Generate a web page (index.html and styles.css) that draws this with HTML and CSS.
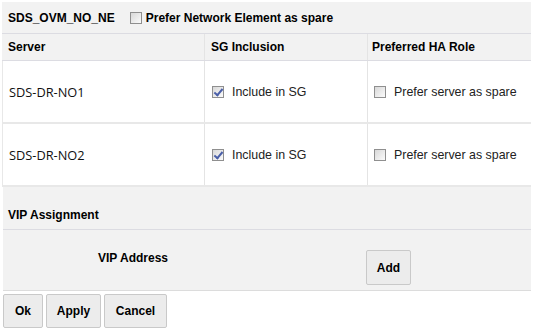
FILE: index.html
```html
<!DOCTYPE html>
<html lang="en">
<head>
  <meta charset="UTF-8">
  <title>Server Group</title>
  <link rel="stylesheet" href="styles.css">
</head>
<body>
  <div class="dialog">
    <div class="group-head">
      <span class="group-name">SDS_OVM_NO_NE</span>
      <label class="check bold"><span class="box"></span>Prefer Network Element as spare</label>
    </div>

    <div class="grid">
      <div class="row head">
        <div class="cell c1">Server</div>
        <div class="cell c2">SG Inclusion</div>
        <div class="cell c3">Preferred HA Role</div>
      </div>
      <div class="row body">
        <div class="cell c1 name">SDS-DR-NO1</div>
        <div class="cell c2"><label class="check"><span class="box checked"></span>Include in SG</label></div>
        <div class="cell c3"><label class="check"><span class="box"></span>Prefer server as spare</label></div>
      </div>
      <div class="row body">
        <div class="cell c1 name">SDS-DR-NO2</div>
        <div class="cell c2"><label class="check"><span class="box checked"></span>Include in SG</label></div>
        <div class="cell c3"><label class="check"><span class="box"></span>Prefer server as spare</label></div>
      </div>
    </div>

    <div class="vip">
      <div class="vip-title">VIP Assignment</div>
      <div class="vip-body">
        <span class="vip-label">VIP Address</span>
        <button class="btn add">Add</button>
      </div>
    </div>

    <div class="actions">
      <button class="btn ok">Ok</button>
      <button class="btn apply">Apply</button>
      <button class="btn cancel">Cancel</button>
    </div>
  </div>
</body>
</html>
```

FILE: styles.css
```css
* {
  box-sizing: border-box;
}

body {
  margin: 0;
  background-color: white;
  font-family: "Liberation Sans", Arial, sans-serif;
  font-size: 12px;
  color: #000;
}

.dialog {
  width: 533px;
  padding-top: 2px;
}

.group-head {
  display: flex;
  align-items: center;
  gap: 15px;
  height: 31px;
  margin: 0 2px;
  padding: 0 6px;
  background-color: #f2f2f2;
  font-weight: bold;
}

.check {
  display: flex;
  align-items: center;
  gap: 8px;
}

.check.bold {
  gap: 4px;
}

.box {
  width: 12px;
  height: 12px;
  border: 1px solid #8f8f8f;
  background: linear-gradient(135deg, #d8d8d8, #fbfbfb);
  position: relative;
}

.box.checked::after {
  content: "";
  position: absolute;
  left: 3px;
  top: 0px;
  width: 3px;
  height: 7px;
  border: solid #4a5fa8;
  border-width: 0 2px 2px 0;
  transform: rotate(40deg);
}

.grid {
  margin: 0 2px;
}

.row {
  display: flex;
}

.cell {
  display: flex;
  align-items: center;
  border-right: 1px solid #e4e4e4;
}

.c1 {
  width: 203px;
  padding-left: 6px;
}

.c2 {
  width: 163px;
  padding-left: 6px;
}

.c3 {
  width: 163px;
  padding-left: 4px;
  border-right: 0;
}

.row.head {
  height: 28px;
  background-color: #f2f2f2;
  border-top: 1px solid #dcdce2;
  border-bottom: 1px solid #dcdce2;
  font-weight: bold;
}

.row.body {
  height: 63px;
  border-bottom: 2px solid #e8e8e8;
  color: #222;
  font-size: 12.4px;
}

.row.body .c1 {
  border-left: 1px solid #e8e8e8;
}

.row.body .c2 {
  padding-left: 7px;
}

.row.body .c3 {
  padding-left: 6px;
}

.name {
  font-family: "Open Sans", "Liberation Sans", sans-serif;
  font-size: 12.8px;
  color: #111;
}

.vip {
  margin: 0 2px 0 3px;
  background-color: #f2f2f2;
  border-bottom: 1px solid #dcdcdc;
}

.vip-title {
  height: 43px;
  display: flex;
  align-items: flex-end;
  padding: 0 0 7px 5px;
  font-weight: bold;
  border-bottom: 1px solid #dcdce2;
}

.vip-body {
  height: 60px;
  display: flex;
  align-items: flex-start;
  padding: 20px 0 0 95px;
  font-weight: bold;
}

.vip-label {
  width: 268px;
  line-height: 16px;
}

.btn {
  font-family: "Liberation Sans", Arial, sans-serif;
  font-size: 12px;
  font-weight: bold;
  color: #000;
  height: 34px;
  padding: 0;
  background-color: #ececec;
  border: 1px solid #c9c9c9;
  border-radius: 2px;
}

.add {
  width: 45px;
  height: 35px;
}

.ok {
  width: 40px;
}

.apply {
  width: 55px;
}

.cancel {
  width: 63px;
}

.actions {
  display: flex;
  gap: 3px;
  padding: 3px 0 0 3px;
}
```
